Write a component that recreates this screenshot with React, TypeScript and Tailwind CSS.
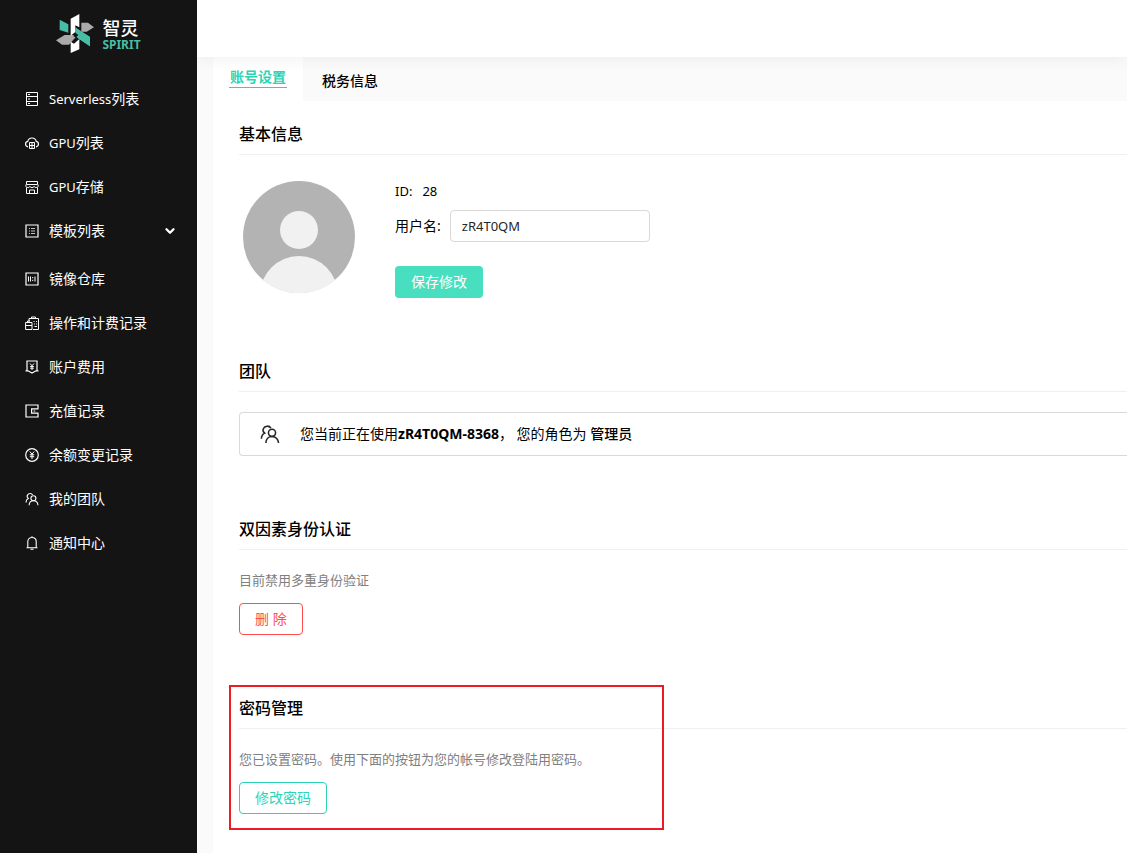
import React from 'react';
import { ChevronDown } from 'lucide-react';

const Icon: React.FC<{ children: React.ReactNode; className?: string }> = ({ children, className = 'size-3.5' }) => (
  <svg viewBox="0 0 14 14" fill="none" stroke="currentColor" strokeWidth="1" className={`shrink-0 ${className}`} aria-hidden="true">
    {children}
  </svg>
);

const ServerIcon = () => (
  <Icon>
    <path d="M1.500 .5h11v13h-11zM1.500 4.500h11M1.500 9.500h11M3 2.500h2M3 7h2M3 11.500h2" />
  </Icon>
);

const CloudIcon = () => (
  <Icon>
    <path d="M3 10.800C1.400 10.500.5 9.300.5 8c0-1.500 1-2.500 2.300-2.700C3.200 3.300 4.900 2 7 2s3.800 1.300 4.200 3.300C12.500 5.500 13.500 6.500 13.500 8c0 1.300-.9 2.500-2.500 2.800" strokeWidth="1.200" />
    <path d="M4.500 6.500h5v6h-5zM4.500 9.500h5M7 6.500v6" />
  </Icon>
);

const StoreIcon = () => (
  <Icon>
    <path d="M1.500 1.500h11v3h-11zM1 4.500L.8 6.500c1.300 1.400 2.800 1.400 4.100 0 1.300 1.400 2.900 1.400 4.200 0 1.300 1.400 2.800 1.400 4.100 0L13 4.500M1.500 7.500v6h11v-6M4.500 13v-3h5v3" />
  </Icon>
);

const ListIcon = () => (
  <Icon>
    <path d="M1 1h12v12H1z" strokeWidth="1.200" />
    <path d="M4 4.500h1M6 4.500h4M4 7h1M6 7h4M4 9.500h1M6 9.500h4" opacity=".75" />
  </Icon>
);

const MirrorIcon = () => (
  <Icon>
    <path d="M1 1h12v12H1z" strokeWidth="1.200" />
    <path d="M3.500 4.500v5M5.500 4.500v5M10 4.500v5M7.700 5v1.200M7.700 7.800V9" />
  </Icon>
);

const BillIcon = () => (
  <Icon>
    <path d="M4 5.500V2.500h9.500v11H8M6.500 2.500V1h4v1.500M.6 6.500h6.400v7H.6zM.6 9.500H7M2.500 6.500v-1.500h2.500M8.500 5.500h1M11 5.500h1M9 8h1M11 8h1M9.500 10.500H12" />
  </Icon>
);

const FeeIcon = () => (
  <Icon>
    <path d="M2 11V1h10v10M.5 10.800h2.500L7 13l4-2.200h2.500" strokeWidth="1.200" />
    <path d="M5 3.500l2 2.300 2-2.300M7 5.800V10M5.200 6.500h3.600M5.200 8.200h3.600" />
  </Icon>
);

const WalletIcon = () => (
  <Icon>
    <path d="M13 4.500V1H1v12h12V9.500M13.500 4.900H6.600v4.300h6.900M8.500 7h1.800" strokeWidth="1.200" />
  </Icon>
);

const CoinIcon = () => (
  <Icon>
    <circle cx="7" cy="7" r="6.300" strokeWidth="1.200" />
    <path d="M4.800 3.500L7 6.200l2.200-2.700M7 6.200V11M4.800 6.800h4.400M4.800 8.700h4.400" />
  </Icon>
);

const TeamIcon: React.FC<{ className?: string }> = ({ className }) => (
  <Icon className={className}>
    <path d="M1 10.400c0-1.900.8-3.300 2.300-4C2.100 5.500 1.900 4 2.600 2.900 3.700 1.100 6.500 1 7.600 2.900" strokeWidth="1.100" />
    <circle cx="8.400" cy="6.200" r="2.500" strokeWidth="1.100" />
    <path d="M4.100 13.300c.1-2.600 1.800-4.600 4.300-4.600s4.400 2 4.600 4.600" strokeWidth="1.100" />
  </Icon>
);

const BellIcon = () => (
  <Icon>
    <path d="M1.500 11.800h11M2.800 11.500V5.600C2.800 3.100 4.600 1.500 7 1.500s4.200 1.600 4.200 4.100v5.900M7 .2v1.300M5.500 13.300h3" strokeWidth="1.100" />
  </Icon>
);

const menu = [
  { en: 'Serverless', label: '列表', icon: ServerIcon },
  { en: 'GPU', label: '列表', icon: CloudIcon },
  { en: 'GPU', label: '存储', icon: StoreIcon },
  { label: '模板列表', icon: ListIcon, expandable: true },
  { label: '镜像仓库', icon: MirrorIcon },
  { label: '操作和计费记录', icon: BillIcon },
  { label: '账户费用', icon: FeeIcon },
  { label: '充值记录', icon: WalletIcon },
  { label: '余额变更记录', icon: CoinIcon },
  { label: '我的团队', icon: TeamIcon },
  { label: '通知中心', icon: BellIcon },
];

const Logo: React.FC = () => (
  <div className="flex h-[65px] items-center justify-center gap-2 pt-0.5">
    <svg viewBox="46 41 114 117" className="h-[39px] w-[38px]" aria-hidden="true">
      <path d="M57 58l26 14v25l-26-8z" fill="#48bda5" />
      <path d="M122 67h20l18 14-22 13h-14l-2-2z" fill="#aaa" />
      <path d="M46 120l26-16h39l-26 29H64z" fill="#aaa" />
      <path d="M105 82l43 28v28l-43-29z" fill="#48bda5" />
      <path d="M104 96l16 10-10 9-12-8z" fill="#141414" />
      <path d="M105 82l43 28v28l-41-28 6-6-8-6z" fill="#48bda5" />
      <path d="M90 55l26-14v40l-12-6v20l-14 11z" fill="#fff" />
      <path d="M90 124l10 6 16-14v31l-26 11z" fill="#fff" />
    </svg>
    <div className="flex flex-col pt-0.5">
      <span className="text-lg leading-5 font-medium text-white">智灵</span>
      <span className="text-xs leading-3.5 font-bold text-[#48bda5]">SPIRIT</span>
    </div>
  </div>
);

const Sidebar: React.FC = () => (
  <aside className="relative z-20 w-[197px] shrink-0 bg-[#141414] text-white">
    <Logo />
    <nav className="mt-3">
      {menu.map(({ en, label, icon: ItemIcon, expandable }) => (
        <a key={(en ?? '') + label} href="#" className={`flex h-11 items-center pr-5 pl-[25px] text-sm ${expandable ? 'mb-1' : ''}`}>
          <ItemIcon />
          <span className="ml-2.5 flex-1">
            {en && <span className="text-[13px]">{en}</span>}
            {label}
          </span>
          {expandable && <ChevronDown className="size-3.5" strokeWidth={4} />}
        </a>
      ))}
    </nav>
  </aside>
);

const Section: React.FC<{ title: string; highlighted?: boolean; children: React.ReactNode }> = ({ title, highlighted, children }) => (
  <section className="relative">
    <h2 className="border-b border-[#f0f0f0] pb-2 text-base font-medium">{title}</h2>
    {children}
    {highlighted && <div className="pointer-events-none absolute -top-[11px] -left-2.5 h-[145px] w-[435px] border-2 border-[#ed1c24]"></div>}
  </section>
);

const Avatar: React.FC = () => (
  <svg viewBox="0 0 112 112" className="size-28" role="img" aria-label="头像">
    <clipPath id="avatar">
      <circle cx="56" cy="56" r="56" />
    </clipPath>
    <g clipPath="url(#avatar)">
      <path d="M0 0h112v112H0z" fill="#b3b3b3" />
      <circle cx="56" cy="49" r="19" fill="#f1f1f1" />
      <circle cx="56" cy="114" r="39" fill="#f1f1f1" />
      <path d="M0 99h112v13H0z" fill="#f1f1f1" />
    </g>
  </svg>
);

export default function App() {
  return (
    <div className="flex min-h-screen overflow-hidden bg-[#fafafa] font-['Noto_Sans','Noto_Sans_CJK_SC',sans-serif] text-sm text-black">
      <Sidebar />
      <div className="flex min-w-0 flex-1 flex-col">
        <header className="relative z-10 h-[57px] bg-white shadow-[0_2px_16px_rgba(0,0,0,0.06)]"></header>
        <main className="ml-4 flex-1 bg-white">
          <div className="flex h-11 bg-[#fafafa]">
            <div className="w-[90px] bg-white px-4 pt-2.5">
              <a href="#" className="block border-b border-[#2bd4b4] text-center leading-5 font-bold text-[#2bd4b4]">账号设置</a>
            </div>
            <a href="#" className="flex items-center px-[19px] pt-1 font-medium">税务信息</a>
          </div>

          <div className="flex flex-col gap-[61px] pt-[21px] pb-10 pl-[26px]">
            <Section title="基本信息">
              <div className="flex gap-10 pt-[26px] pl-1">
                <Avatar />
                <div>
                  <div className="flex h-5 items-center gap-2.5 text-[13px]">
                    <span>ID:</span>
                    <span>28</span>
                  </div>
                  <div className="mt-[9px] flex items-center gap-[9px]">
                    <label htmlFor="username">用户名:</label>
                    <input id="username" defaultValue="zR4T0QM" className="h-8 w-[200px] rounded border border-[#d9d9d9] bg-white px-[11px] text-[13px] text-[#262626]" />
                  </div>
                  <button type="button" className="mt-6 h-8 rounded bg-[#48dfc0] px-4 text-white">保存修改</button>
                </div>
              </div>
            </Section>

            <Section title="团队">
              <div className="mt-5 flex h-11 items-center gap-5 rounded-l border border-r-0 border-[#d9d9d9] pl-5">
                <TeamIcon className="size-5 text-[#262626]" />
                <p>
                  您当前正在使用<b>zR4T0QM-8368</b>， 您的角色为 <b className="font-medium">管理员</b>
                </p>
              </div>
            </Section>

            <Section title="双因素身份认证">
              <p className="mt-5 text-[13px] leading-5 text-[#808080]">目前禁用多重身份验证</p>
              <button type="button" className="mt-[13px] h-8 rounded border border-[#ff4d4f] px-[15px] text-[#ff4d4f]">删 除</button>
            </Section>

            <Section title="密码管理" highlighted>
              <p className="mt-5 text-[13px] leading-5 text-[#808080]">您已设置密码。使用下面的按钮为您的帐号修改登陆用密码。</p>
              <button type="button" className="mt-[13px] h-8 rounded border border-[#2bd4b4] px-[15px] text-[#2bd4b4]">修改密码</button>
            </Section>
          </div>
        </main>
      </div>
    </div>
  );
}
